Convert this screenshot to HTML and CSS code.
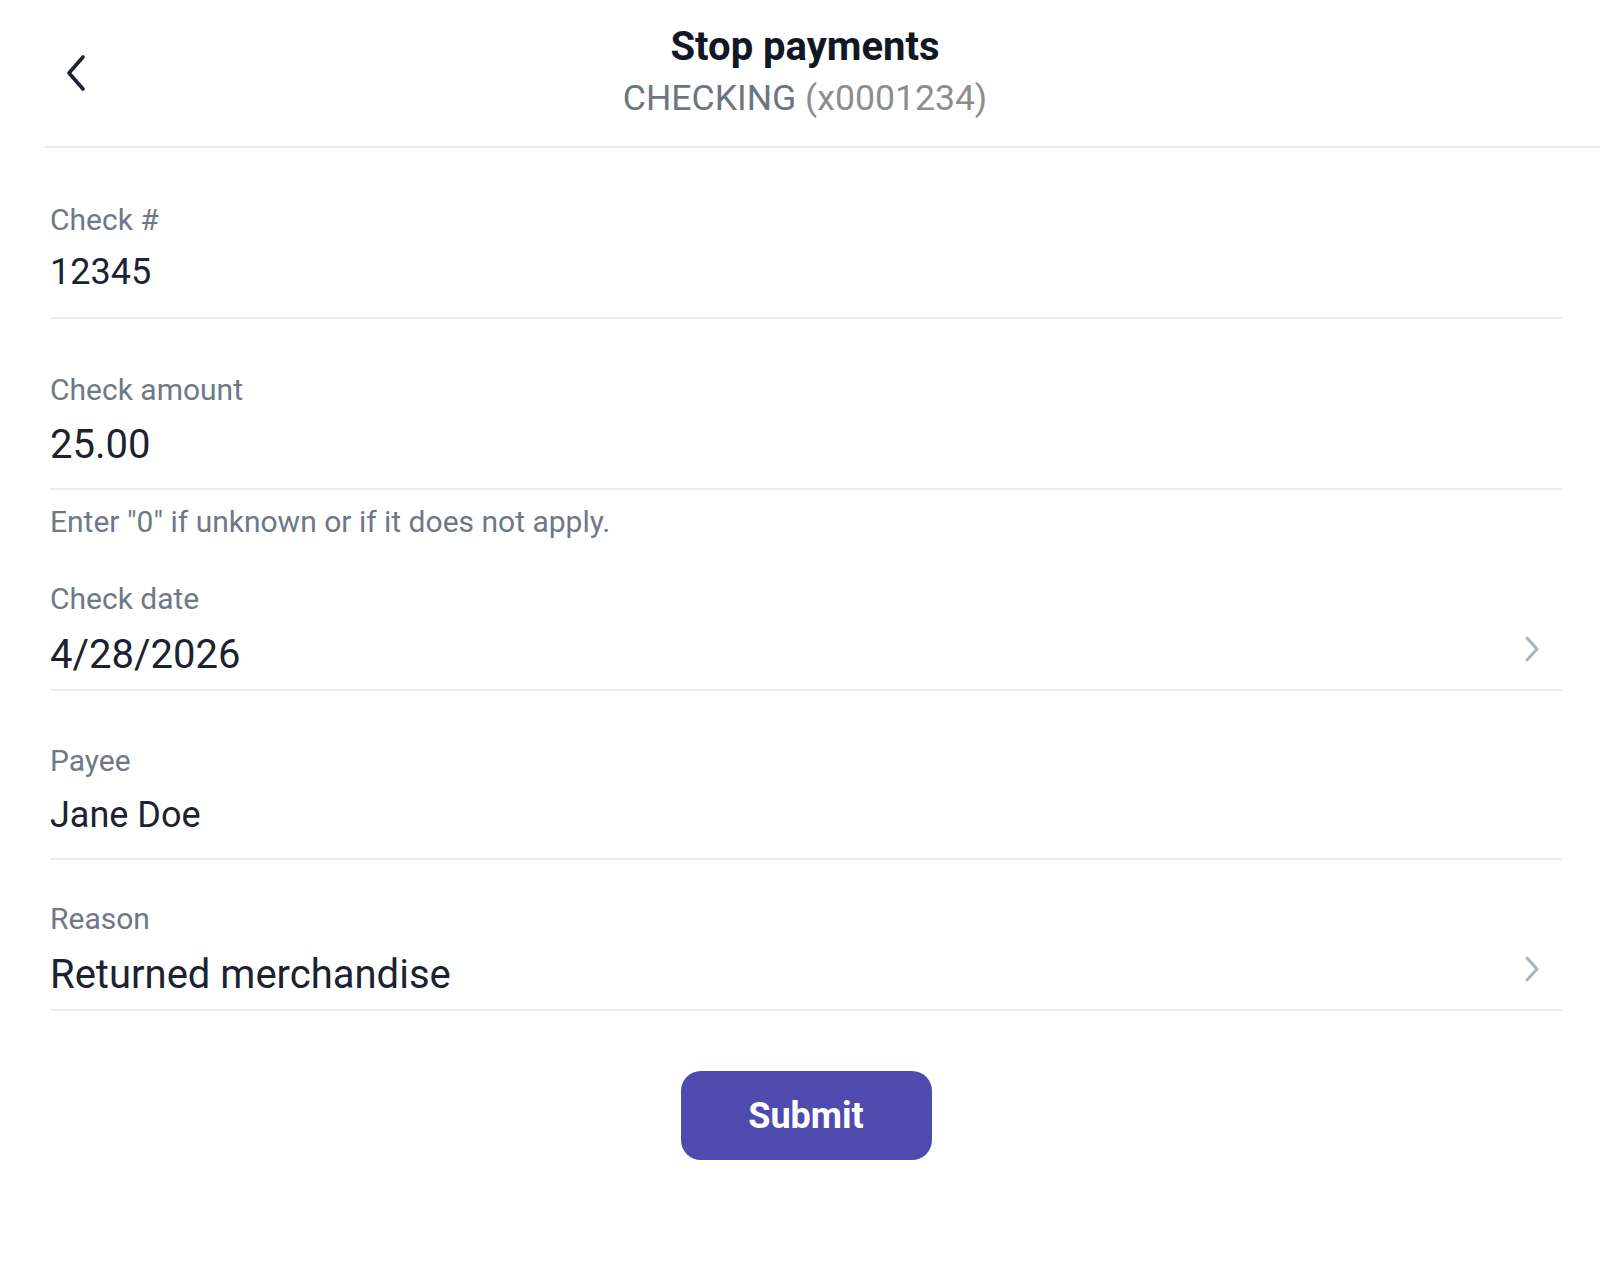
FILE: index.html
```html
<!DOCTYPE html>
<html lang="en">
<head>
<meta charset="utf-8">
<title>Stop payments</title>
<link rel="stylesheet" href="styles.css">
</head>
<body>
<header class="header">
  <button class="back" aria-label="Back">
    <svg width="22" height="38" viewBox="0 0 22 38"><path d="M18 3 L4 19 L18 35" fill="none" stroke="#1b2332" stroke-width="3.6" stroke-linecap="round" stroke-linejoin="round"/></svg>
  </button>
  <div class="titles">
    <h1 class="title">Stop payments</h1>
    <div class="subtitle"><span class="acct">CHECKING</span> <span class="acct-num">(x0001234)</span></div>
  </div>
  <div class="spacer"></div>
</header>
<main class="content">
  <div class="field field-check">
    <div class="field-body">
      <div class="label">Check #</div>
      <div class="value value-md">12345</div>
    </div>
  </div>
  <div class="field field-amount">
    <div class="field-body">
      <div class="label">Check amount</div>
      <div class="value value-lg">25.00</div>
    </div>
  </div>
  <p class="helper">Enter "0" if unknown or if it does not apply.</p>
  <div class="field field-date">
    <div class="field-body">
      <div class="label">Check date</div>
      <div class="value value-lg">4/28/2026</div>
    </div>
    <svg class="chev" width="16" height="26" viewBox="0 0 16 26"><path d="M3 2 L13 13 L3 24" fill="none" stroke="#a9b4c1" stroke-width="3" stroke-linecap="round" stroke-linejoin="round"/></svg>
  </div>
  <div class="field field-payee">
    <div class="field-body">
      <div class="label">Payee</div>
      <div class="value value-md">Jane Doe</div>
    </div>
  </div>
  <div class="field field-reason">
    <div class="field-body">
      <div class="label">Reason</div>
      <div class="value value-lg">Returned merchandise</div>
    </div>
    <svg class="chev" width="16" height="26" viewBox="0 0 16 26"><path d="M3 2 L13 13 L3 24" fill="none" stroke="#a9b4c1" stroke-width="3" stroke-linecap="round" stroke-linejoin="round"/></svg>
  </div>
  <div class="actions">
    <button class="submit">Submit</button>
  </div>
</main>
</body>
</html>
```
FILE: styles.css
```css
* { box-sizing: border-box; }
html, body { margin: 0; padding: 0; background: #ffffff; }
body {
  font-family: Roboto, "Liberation Sans", Arial, sans-serif;
  color: #1b2230;
}

.header {
  margin-left: 45px;
  height: 148px;
  border-bottom: 2px solid #ececed;
  display: grid;
  grid-template-columns: 60px 1fr 60px;
  padding: 0 55px 0 20px;
  align-items: start;
}
.back {
  align-self: center;
  background: none;
  border: 0;
  padding: 0;
  margin: 0;
  width: 22px;
  height: 38px;
  display: block;
  cursor: pointer;
}
.back svg { display: block; }
.titles {
  text-align: center;
  padding-top: 20px;
}
.title {
  margin: 0;
  font-size: 40px;
  line-height: 53px;
  font-weight: 700;
  color: #111725;
}
.subtitle {
  margin-top: 3px;
  font-size: 35.6px;
  line-height: 44px;
  color: #727b87;
}
.acct { color: #6c7683; }
.acct-num { color: #8d8d8f; }

.content {
  margin-left: 50px;
  width: 1512px;
}
.field {
  display: flex;
  align-items: flex-end;
  border-bottom: 2px solid #ececed;
}
.field-body { flex: 1; }
.label {
  font-size: 30px;
  line-height: 36px;
  color: #6e7887;
}
.value {
  margin-top: 13px;
  color: #1b2230;
}
.value-md { font-size: 36px; line-height: 44px; }
.value-lg { font-size: 40px; line-height: 48px; }

.field-check { padding: 54px 0 23px; }
.field-check .value { margin-top: 12px; }
.field-amount { padding: 53px 0 19px; }
.field-date { padding: 41px 0 10px; }
.field-date .value { margin-top: 14px; }
.field-payee { padding: 52px 0 21px; }
.field-payee .value { margin-top: 14px; }
.field-reason { padding: 41px 0 10px; }
.field-reason .value { margin-top: 14px; }

.chev {
  flex: none;
  margin: 0 22px 17px 0;
  display: block;
}

.helper {
  margin: 14px 0 0;
  font-size: 30px;
  line-height: 36px;
  color: #6e7887;
}

.actions {
  display: flex;
  justify-content: center;
  padding-top: 60px;
}
.submit {
  width: 251px;
  height: 89px;
  border: 0;
  border-radius: 20px;
  background: #4f4aae;
  color: #ffffff;
  font-family: Roboto, "Liberation Sans", Arial, sans-serif;
  font-size: 36px;
  font-weight: 700;
  cursor: pointer;
}
```
